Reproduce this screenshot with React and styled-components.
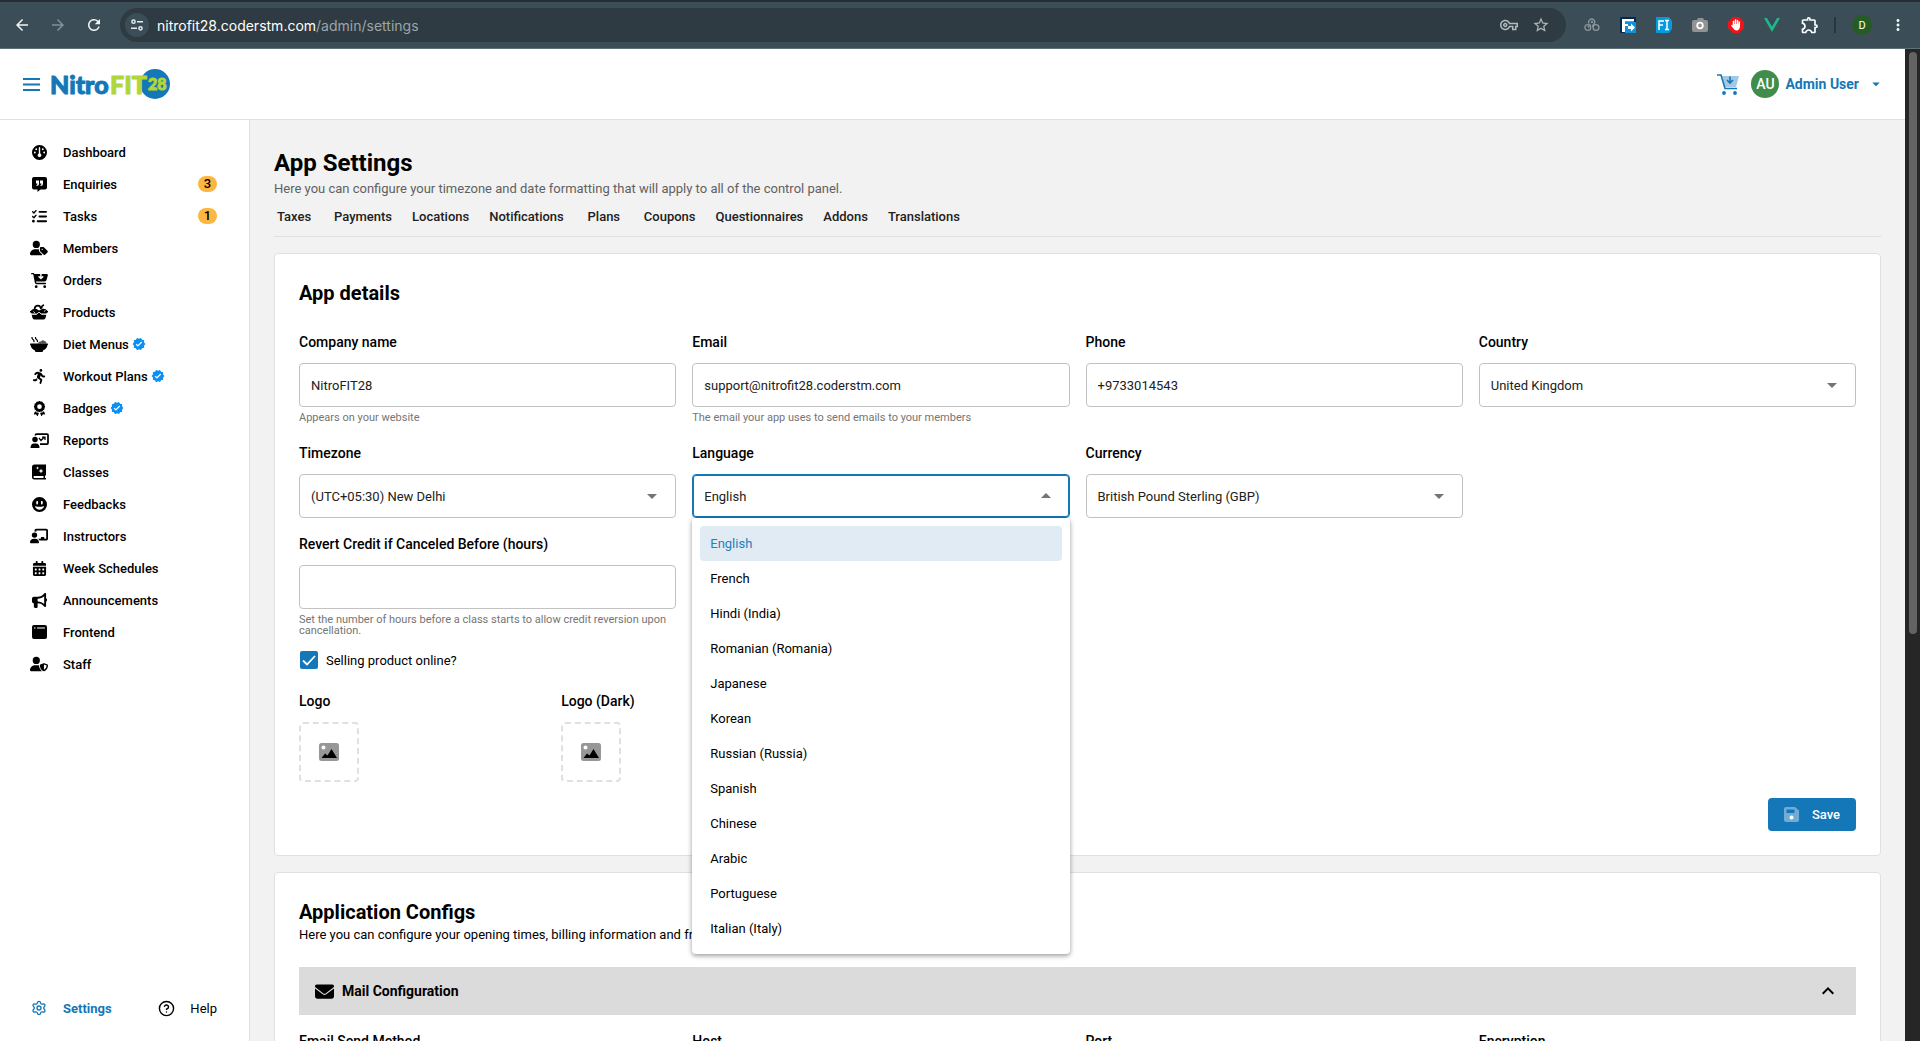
import React, { useState } from 'react'
import styled, { createGlobalStyle } from 'styled-components'
import {
  FaGauge, FaListCheck, FaUserTag, FaCartArrowDown, FaPersonRunning, FaAward,
  FaFaceGrinWide, FaChalkboardUser, FaCalendarDays, FaBullhorn, FaUserShield, FaEnvelope,
} from 'react-icons/fa6'
import {
  MdVerified, MdArrowDropDown, MdArrowDropUp, MdOutlineVpnKey, MdStarBorder,
  MdMoreVert, MdOutlineExtension, MdArrowBack, MdArrowForward, MdRefresh, MdExpandLess,
} from 'react-icons/md'
import { FiHelpCircle } from 'react-icons/fi'
import { Settings } from 'lucide-react'

/* ---------- icons ---------- */
const QuoteIcon = () => (
  <svg width="15" height="15" viewBox="0 0 30 30">
    <path fill="#000" d="M4 0h22a4 4 0 0 1 4 4v17a4 4 0 0 1-4 4H17l-6 5v-5H4a4 4 0 0 1-4-4V4a4 4 0 0 1 4-4z" />
    <path fill="#fff" d="M8 7h6v7q0 4-5 4v-2q2-1 2-3H8zM16 7h6v7q0 4-5 4v-2q2-1 2-3h-3z" />
  </svg>
)
const BasketIcon = () => (
  <svg width="18" height="16" viewBox="0 0 36 32">
    <path fill="none" stroke="#000" strokeWidth="3.5" d="M9 12q0-9 7-9 5 0 6 7M23 9q0-6 5-7" />
    <path d="M1 14q6-6 12-4l5 3 6-3q7-2 11 4l-2 5H22l-4-4-4 4H3z" />
    <path d="M0 14h36v3H0zM3 20h10l5-4 5 4h10l-2 8q-1 3-5 3H10q-4 0-5-3z" />
    <path stroke="#fff" strokeWidth="1.6" fill="none" d="M2 21h11l5-5 5 5h11M7 15l3 3M28 15l3-2" />
  </svg>
)
const BowlIcon = () => (
  <svg width="18" height="15" viewBox="0 0 36 30">
    <path fill="none" stroke="#000" strokeWidth="2.6" strokeLinecap="round" d="M4 1q0 3 2 4t2 4M11 1q0 3 2 4t2 4" />
    <path fill="#555" d="M16 13q1-5 6-4 3-4 7-1 4 0 4 5z" />
    <path d="M1 13h34q2 1 0 3-1 7-9 11v1q0 2-2 2h-12q-2 0-2-2v-1q-8-4-9-11-2-2 0-3z" />
  </svg>
)
const ReportIcon = () => (
  <svg width="19" height="15" viewBox="0 0 38 30">
    <circle cx="10" cy="13" r="5.5" />
    <path d="M1 30q0-9 7-9h4q7 0 7 9z" />
    <path fill="none" stroke="#000" strokeWidth="3.5" d="M11 5V4q0-2 2-2h21q2 0 2 2v16q0 2-2 2H20" />
    <path fill="none" stroke="#000" strokeWidth="2.5" d="M18 10l4 5 7-7M24 8h6v6" />
  </svg>
)
const BookIcon = () => (
  <svg width="14" height="16" viewBox="0 0 28 32">
    <path d="M5 1h23v22h-2v5h2v3H5q-5 0-5-5V6q0-5 5-5z" />
    <path fill="#fff" d="M5 24h18v4H5q-2 0-2-2t2-2zM18 9l1.500 3.500L23 14l-3.500 1.500L18 19l-1.500-3.500L13 14l3.500-1.500zM11 5l1 2 2 1-2 1-1 2-1-2-2-1 2-1z" />
  </svg>
)
const WindowIcon = () => (
  <svg width="15" height="14" viewBox="0 0 30 28">
    <rect width="30" height="28" rx="4" />
    <path stroke="#fff" strokeWidth="2" d="M4 6h3M10 6h16" />
  </svg>
)
const ImageIcon = () => (
  <svg width="20" height="18" viewBox="0 0 40 36">
    <rect width="40" height="36" rx="5" fill="#979797" />
    <circle cx="9" cy="9" r="4" fill="#fff" />
    <path d="M5 30l7-9 5 4 8-13 11 18z" />
  </svg>
)
const SaveIcon = () => (
  <svg width="15" height="15" viewBox="0 0 30 30">
    <path fill="#72abd5" d="M4 0h18l8 7v19a4 4 0 0 1-4 4H4a4 4 0 0 1-4-4V4a4 4 0 0 1 4-4z" />
    <path fill="#1477b8" d="M5 5h16v7H5z" />
    <circle cx="15" cy="21" r="4" fill="#fff" />
  </svg>
)
const MenuIcon = () => (
  <svg width="17" height="13" viewBox="0 0 17 13">
    <path stroke="#1477b8" strokeWidth="2" d="M0 1h17M0 6.500h17M0 12h17" />
  </svg>
)
const HeaderCart = () => (
  <svg width="22" height="21" viewBox="0 0 22 21">
    <path fill="#a3c8e3" d="M5 2h17l-3 11H7z" />
    <path fill="none" stroke="#1477b8" strokeWidth="1.600" d="M0 1h4l4 13.500h12" />
    <path fill="none" stroke="#1477b8" strokeWidth="1.600" d="M13 2.500v6M10 6l3 3 3-3" />
    <circle cx="7" cy="19" r="1.900" fill="#1477b8" />
    <circle cx="18" cy="19" r="1.900" fill="#1477b8" />
  </svg>
)
const TuneIcon = () => (
  <svg width="12" height="12" viewBox="0 0 12 12" fill="none" stroke="#e6eaec" strokeWidth="1.500">
    <circle cx="2.500" cy="2.700" r="1.600" />
    <circle cx="9.500" cy="9.300" r="1.600" />
    <path d="M6 2.700h6M0 9.300h6" />
  </svg>
)
const Logo = () => (
  <svg width="124" height="44" viewBox="0 0 124 44" role="img" aria-label="NitroFIT28">
    <circle cx="105" cy="22" r="15" fill="#1477b8" />
    <g fontFamily="Lato, 'Liberation Sans', sans-serif" fontWeight="900">
      <text x="60" y="32" fontSize="25" fill="#b2d63a" stroke="#b2d63a" strokeWidth="1">FIT</text>
      <text x="0" y="32" fontSize="25" fill="#1477b8" stroke="#1477b8" strokeWidth="1">Nitro</text>
      <text x="98" y="28" fontSize="16" fill="#b2d63a" stroke="#b2d63a" strokeWidth="1">28</text>
    </g>
  </svg>
)
const HookIcon = () => (
  <svg width="16" height="14" viewBox="0 0 16 14" fill="none" stroke="#8d979c" strokeWidth="1.300">
    <path d="M5 5.500A3 3 0 1 1 10 6L8 8.500" />
    <circle cx="3.800" cy="9.500" r="2.900" />
    <circle cx="12" cy="9.500" r="2.900" />
    <circle cx="8" cy="4" r="0.500" />
    <path d="M6.500 6.500L4 9.500" />
  </svg>
)
const FormIcon = () => (
  <svg width="16" height="16" viewBox="0 0 16 16">
    <rect width="16" height="16" rx="1" fill="#03294f" />
    <path fill="#1390d8" d="M5 5h11v11H5z" />
    <path fill="#fff" d="M2 2h12v2.500H5V7h3v2H5v6H2zM8 9h3V6.500l4 4-4 4V12H8z" />
  </svg>
)
const FontIcon = () => (
  <svg width="16" height="16" viewBox="0 0 16 16">
    <path fill="#089bdc" d="M1 0h12l3 4v8l-3 4H1q-1 0-1-1V1q0-1 1-1z" />
    <path fill="none" stroke="#fff" strokeWidth="1.500" d="M3 13V4h5M3 8h4M9 3.500h4M11 3.500v9M9 12.500h4" />
  </svg>
)
const CameraIcon = () => (
  <svg width="16" height="14" viewBox="0 0 16 14">
    <path fill="#929292" d="M2 2h3l1-2h5l1 2h2q2 0 2 2v8q0 2-2 2H2q-2 0-2-2V4q0-2 2-2z" />
    <circle cx="8" cy="7.500" r="2.800" fill="#929292" stroke="#fff" strokeWidth="1.800" />
  </svg>
)
const BlockIcon = () => (
  <svg width="16" height="16" viewBox="0 0 16 16">
    <path fill="#f41216" d="M5 0h6l5 5v6l-5 5H5l-5-5V5z" />
    <path fill="none" stroke="#fff" strokeWidth="1.500" strokeLinecap="round" d="M5.500 8V4.500M7.500 7V3M9.500 7V3.500M11.300 8V5" />
    <path fill="#fff" d="M4.800 7h7.200v2.500q-.5 4-3.500 4-2 0-3.500-2.500L3 8.500q1-1 1.800.3z" />
  </svg>
)
const VueIcon = () => (
  <svg width="16" height="14" viewBox="0 0 16 14">
    <path fill="#1fb784" d="M0 0h3.200L8 8.300 12.800 0H16L8 14z" />
    <path fill="#34495e" d="M3.200 0H6l2 3.500L10 0h2.800L8 8.300z" />
  </svg>
)

/* ---------- data ---------- */
const menu = [
  { name: 'Dashboard', icon: <FaGauge /> },
  { name: 'Enquiries', icon: <QuoteIcon />, count: 3 },
  { name: 'Tasks', icon: <FaListCheck />, count: 1 },
  { name: 'Members', icon: <FaUserTag size={18} /> },
  { name: 'Orders', icon: <FaCartArrowDown size={17} /> },
  { name: 'Products', icon: <BasketIcon /> },
  { name: 'Diet Menus', icon: <BowlIcon />, verified: true },
  { name: 'Workout Plans', icon: <FaPersonRunning />, verified: true },
  { name: 'Badges', icon: <FaAward />, verified: true },
  { name: 'Reports', icon: <ReportIcon /> },
  { name: 'Classes', icon: <BookIcon /> },
  { name: 'Feedbacks', icon: <FaFaceGrinWide /> },
  { name: 'Instructors', icon: <FaChalkboardUser size={18} /> },
  { name: 'Week Schedules', icon: <FaCalendarDays /> },
  { name: 'Announcements', icon: <FaBullhorn /> },
  { name: 'Frontend', icon: <WindowIcon /> },
  { name: 'Staff', icon: <FaUserShield size={18} /> },
]
const tabs = ['Taxes', 'Payments', 'Locations', 'Notifications', 'Plans', 'Coupons', 'Questionnaires', 'Addons', 'Translations']
const languages = [
  'English', 'French', 'Hindi (India)', 'Romanian (Romania)', 'Japanese', 'Korean',
  'Russian (Russia)', 'Spanish', 'Chinese', 'Arabic', 'Portuguese', 'Italian (Italy)',
]

/* ---------- form parts ---------- */
function TextField({ id, label, value, type = 'text', help }) {
  return (
    <Field>
      <Label htmlFor={id}>{label}</Label>
      <Control>
        <Input id={id} type={type} defaultValue={value} />
      </Control>
      {help && <Help>{help}</Help>}
    </Field>
  )
}

function SelectField({ id, label, value }) {
  return (
    <Field>
      <Label htmlFor={id}>{label}</Label>
      <Control>
        <Select id={id} defaultValue={value}>
          <option>{value}</option>
        </Select>
        <Arrow><MdArrowDropDown /></Arrow>
      </Control>
    </Field>
  )
}

function LanguageField() {
  const [language, setLanguage] = useState('English')
  return (
    <Field>
      <Label htmlFor="language">Language</Label>
      <Control $active>
        <Select id="language" value={language} onChange={(e) => setLanguage(e.target.value)}>
          {languages.map((l) => <option key={l}>{l}</option>)}
        </Select>
        <Arrow><MdArrowDropUp /></Arrow>
      </Control>
      <Options role="listbox" aria-label="Language">
        {languages.map((l) => (
          <Option key={l} role="option" aria-selected={l === language} $active={l === language} onClick={() => setLanguage(l)}>
            {l}
          </Option>
        ))}
      </Options>
    </Field>
  )
}

function BrowserBar() {
  return (
    <Browser>
      <NavButton aria-label="Back"><MdArrowBack /></NavButton>
      <NavButton aria-label="Forward" $muted><MdArrowForward /></NavButton>
      <NavButton aria-label="Reload"><MdRefresh /></NavButton>
      <Address>
        <SiteInfo><TuneIcon /></SiteInfo>
        <Url><b>nitrofit28.coderstm.com</b>/admin/settings</Url>
        <MdOutlineVpnKey />
        <MdStarBorder />
      </Address>
      <Extensions>
        <HookIcon />
        <FormIcon />
        <FontIcon />
        <CameraIcon />
        <BlockIcon />
        <VueIcon />
        <MdOutlineExtension size={20} />
      </Extensions>
      <Separator />
      <Profile>D</Profile>
      <NavButton aria-label="More"><MdMoreVert /></NavButton>
    </Browser>
  )
}

function Sidebar() {
  return (
    <Aside>
      <nav>
        {menu.map((m) => (
          <MenuItem key={m.name} href="#">
            <IconBox>{m.icon}</IconBox>
            <span>{m.name}</span>
            {m.verified && <Verified><MdVerified /></Verified>}
            {m.count && <Count>{m.count}</Count>}
          </MenuItem>
        ))}
      </nav>
      <Bottom>
        <BottomLink href="#" $active>
          <IconBox><Settings size={16} strokeWidth={2} /></IconBox>
          Settings
        </BottomLink>
        <BottomLink href="#">
          <IconBox><FiHelpCircle size={17} /></IconBox>
          Help
        </BottomLink>
      </Bottom>
    </Aside>
  )
}

export default function App() {
  return (
    <Page>
      <GlobalStyle />
      <BrowserBar />
      <Viewport>
        <Shell>
          <Header>
            <MenuButton aria-label="Menu"><MenuIcon /></MenuButton>
            <Logo />
            <User>
              <HeaderCart />
              <Avatar>AU</Avatar>
              <UserName>Admin User <MdArrowDropDown size={18} /></UserName>
            </User>
          </Header>
          <Body>
            <Sidebar />
            <Main>
              <Title>App Settings</Title>
              <Lead>Here you can configure your timezone and date formatting that will apply to all of the control panel.</Lead>
              <Tabs>
                {tabs.map((t) => <Tab key={t} href="#">{t}</Tab>)}
              </Tabs>
              <Card>
                <CardTitle>App details</CardTitle>
                <Grid>
                  <TextField id="company" label="Company name" value="NitroFIT28" help="Appears on your website" />
                  <TextField id="email" label="Email" type="email" value="support@nitrofit28.coderstm.com" help="The email your app uses to send emails to your members" />
                  <TextField id="phone" label="Phone" type="tel" value="+9733014543" />
                  <SelectField id="country" label="Country" value="United Kingdom" />
                  <SelectField id="timezone" label="Timezone" value="(UTC+05:30) New Delhi" />
                  <LanguageField />
                  <SelectField id="currency" label="Currency" value="British Pound Sterling (GBP)" />
                  <RowStart>
                    <TextField
                      id="revert"
                      label="Revert Credit if Canceled Before (hours)"
                      help="Set the number of hours before a class starts to allow credit reversion upon cancellation."
                    />
                  </RowStart>
                </Grid>
                <CheckLabel>
                  <Checkbox type="checkbox" defaultChecked />
                  Selling product online?
                </CheckLabel>
                <Logos>
                  <div>
                    <Label as="p">Logo</Label>
                    <Upload aria-label="Upload logo"><ImageIcon /></Upload>
                  </div>
                  <div>
                    <Label as="p">Logo (Dark)</Label>
                    <Upload aria-label="Upload dark logo"><ImageIcon /></Upload>
                  </div>
                </Logos>
                <Actions>
                  <SaveButton><SaveIcon /> Save</SaveButton>
                </Actions>
              </Card>
              <Card>
                <CardTitle>Application Configs</CardTitle>
                <CardText>Here you can configure your opening times, billing information and fr</CardText>
                <Accordion>
                  <FaEnvelope size={19} />
                  Mail Configuration
                  <MdExpandLess size={24} />
                </Accordion>
                <Grid $tight>
                  <SelectField id="method" label="Email Send Method" value="SMTP" />
                  <TextField id="host" label="Host" />
                  <TextField id="port" label="Port" />
                  <SelectField id="encryption" label="Encryption" value="TLS" />
                </Grid>
              </Card>
            </Main>
          </Body>
        </Shell>
        <ScrollTrack><ScrollThumb /></ScrollTrack>
      </Viewport>
    </Page>
  )
}

const GlobalStyle = createGlobalStyle`
  * {
    box-sizing: border-box;
    margin: 0;
    padding: 0;
  }
  body, button, input, select {
    font-family: Roboto, "Liberation Sans", sans-serif;
    font-size: 13px;
  }
  button {
    border: none;
    background: none;
    cursor: pointer;
  }
  a {
    color: inherit;
    text-decoration: none;
  }
  svg {
    display: block;
    flex: none;
  }
`

const Page = styled.div`
  height: 100vh;
  display: flex;
  flex-direction: column;
  overflow: hidden;
  color: #000;
`

const Browser = styled.div`
  height: 49px;
  flex: none;
  display: flex;
  align-items: center;
  padding: 0 4px;
  background: #3b4e57;
  border-top: 2px solid #242d33;
  border-bottom: 1px solid #5f7079;
  color: #e6eaec;
`

const NavButton = styled.button`
  width: 36px;
  height: 36px;
  display: flex;
  align-items: center;
  justify-content: center;
  font-size: 18px;
  color: ${(p) => (p.$muted ? '#839097' : '#f0f3f4')};
`

const Address = styled.div`
  flex: 1;
  height: 34px;
  margin-left: 8px;
  padding: 0 16px 0 5px;
  border-radius: 17px;
  background: #2f3b42;
  display: flex;
  align-items: center;
  gap: 14px;
  color: #b0b9bd;
  & > svg {
    font-size: 18px;
  }
`

const SiteInfo = styled.span`
  width: 24px;
  height: 24px;
  margin-right: -6px;
  border-radius: 50%;
  background: #3b4e57;
  display: flex;
  align-items: center;
  justify-content: center;
`

const Url = styled.span`
  flex: 1;
  font-family: Inter, Roboto, sans-serif;
  font-size: 14px;
  color: #9ba5aa;
  b {
    font-weight: 400;
    color: #fff;
  }
`

const Extensions = styled.div`
  display: flex;
  align-items: center;
  gap: 20px;
  margin-left: 18px;
  color: #fff;
`

const Separator = styled.span`
  width: 2px;
  height: 16px;
  margin: 0 16px 0 14px;
  background: #2a363c;
`

const Profile = styled.span`
  width: 20px;
  height: 20px;
  margin-right: 8px;
  border-radius: 50%;
  background: #255c22;
  color: #fff;
  font-size: 11px;
  display: flex;
  align-items: center;
  justify-content: center;
`

const Viewport = styled.div`
  flex: 1;
  min-height: 0;
  display: flex;
`

const Shell = styled.div`
  flex: 1;
  min-width: 0;
  display: flex;
  flex-direction: column;
`

const ScrollTrack = styled.div`
  width: 15px;
  padding: 3px;
  background: #262626;
`

const ScrollThumb = styled.div`
  width: 8px;
  height: 59%;
  margin-left: 1px;
  border-radius: 4px;
  background: #636363;
`

const Header = styled.header`
  height: 71px;
  flex: none;
  display: flex;
  align-items: center;
  padding: 0 20px 0 23px;
  background: #fff;
  border-bottom: 1px solid #e0e0e0;
`

const MenuButton = styled.button`
  margin-right: 10px;
`

const User = styled.div`
  margin-left: auto;
  display: flex;
  align-items: center;
  gap: 12px;
`

const Avatar = styled.span`
  width: 28px;
  height: 28px;
  border-radius: 50%;
  background: #408c4b;
  color: #fff;
  font-size: 14px;
  font-weight: 500;
  display: flex;
  align-items: center;
  justify-content: center;
`

const UserName = styled.button`
  display: flex;
  align-items: center;
  gap: 8px;
  margin-left: -6px;
  color: #1477b8;
  font-size: 14px;
  font-weight: 700;
`

const Body = styled.div`
  flex: 1;
  min-height: 0;
  display: flex;
`

const Aside = styled.aside`
  width: 250px;
  flex: none;
  padding: 16px 32px 17px 29px;
  display: flex;
  flex-direction: column;
  justify-content: space-between;
  background: #fff;
  border-right: 1px solid #e0e0e0;
`

const MenuItem = styled.a`
  height: 32px;
  display: flex;
  align-items: center;
  font-weight: 500;
`

const IconBox = styled.span`
  width: 20px;
  margin-right: 14px;
  display: flex;
  justify-content: center;
  font-size: 15px;
`

const Verified = styled.span`
  margin-left: 3px;
  font-size: 14px;
  color: #0a8ff5;
`

const Count = styled.span`
  width: 19px;
  height: 16px;
  margin-left: auto;
  border-radius: 8px;
  background: #fbb644;
  line-height: 16px;
  text-align: center;
`

const Bottom = styled.div`
  display: flex;
  justify-content: space-between;
`

const BottomLink = styled.a`
  height: 32px;
  display: flex;
  align-items: center;
  color: ${(p) => (p.$active ? '#1477b8' : '#000')};
  font-weight: ${(p) => (p.$active ? 700 : 400)};
`

const Main = styled.main`
  flex: 1;
  min-width: 0;
  overflow-y: auto;
  scrollbar-width: none;
  padding: 27px 24px;
  background: #f2f2f2;
`

const Title = styled.h1`
  font-size: 24px;
  line-height: 32px;
  font-weight: 700;
`

const Lead = styled.p`
  line-height: 20px;
  color: #616161;
`

const Tabs = styled.nav`
  display: flex;
  gap: 20px;
  margin: 8px 0 16px;
  padding-bottom: 9px;
  border-bottom: 1px solid #e0e0e0;
`

const Tab = styled.a`
  min-width: 40px;
  line-height: 20px;
  text-align: center;
  font-weight: 500;
  color: #212121;
`

const Card = styled.section`
  padding: 24px;
  margin-bottom: 16px;
  background: #fff;
  border: 1px solid #e0e0e0;
  border-radius: 4px;
`

const CardTitle = styled.h2`
  font-size: 20px;
  line-height: 30px;
  font-weight: 700;
`

const CardText = styled.p`
  line-height: 16px;
  margin-bottom: 24px;
`

const Grid = styled.div`
  display: grid;
  grid-template-columns: repeat(4, minmax(0, 1fr));
  gap: 16px;
  margin-top: ${(p) => (p.$tight ? '16px' : '24px')};
`

const RowStart = styled.div`
  grid-column: 1;
`

const Field = styled.div`
  position: relative;
`

const Label = styled.label`
  display: block;
  margin-bottom: 11px;
  font-size: 14px;
  line-height: 20px;
  font-weight: 500;
`

const Control = styled.div`
  height: 44px;
  display: flex;
  align-items: center;
  border-radius: 4px;
  border: 1px solid ${(p) => (p.$active ? '#1477b8' : '#c2c2c2')};
  box-shadow: ${(p) => (p.$active ? 'inset 0 0 0 1px #1477b8' : 'none')};
`

const Input = styled.input`
  width: 100%;
  height: 100%;
  padding: 0 11px;
  border: none;
  outline: none;
  background: transparent;
  color: #212121;
`

const Select = styled(Input).attrs({ as: 'select' })`
  appearance: none;
`

const Arrow = styled.span`
  margin: 0 11px 0 -35px;
  font-size: 24px;
  color: #757575;
  pointer-events: none;
`

const Help = styled.p`
  padding: 5px 0 4px;
  font-size: 11px;
  line-height: 11px;
  color: #757575;
`

const Options = styled.ul`
  position: absolute;
  top: 100%;
  left: 0;
  right: 0;
  z-index: 10;
  padding: 8px;
  list-style: none;
  background: #fff;
  border-radius: 4px;
  box-shadow: 0 2px 4px rgba(0, 0, 0, 0.3), 0 1px 6px rgba(0, 0, 0, 0.12);
`

const Option = styled.li`
  padding: 0 10px;
  line-height: 35px;
  border-radius: 4px;
  cursor: pointer;
  color: ${(p) => (p.$active ? '#1f80c0' : '#000')};
  background: ${(p) => (p.$active ? '#e0ebf4' : 'transparent')};
`

const CheckLabel = styled.label`
  display: flex;
  align-items: center;
  gap: 8px;
  height: 18px;
  margin: 11px 0 22px 1px;
`

const Checkbox = styled.input`
  appearance: none;
  width: 18px;
  height: 18px;
  border-radius: 2px;
  border: 2px solid #1477b8;
  &:checked {
    background: #1477b8 url("data:image/svg+xml,%3Csvg xmlns='http://www.w3.org/2000/svg' viewBox='0 0 14 14'%3E%3Cpath d='M1 7.500l4 4L13 3' fill='none' stroke='white' stroke-width='1.800'/%3E%3C/svg%3E") center / 14px no-repeat;
  }
`

const Logos = styled.div`
  display: grid;
  grid-template-columns: repeat(6, minmax(0, 1fr));
  gap: 16px;
`

const Upload = styled.button`
  width: 60px;
  height: 60px;
  display: flex;
  align-items: center;
  justify-content: center;
  border: 2px dashed #e0e0e0;
  border-radius: 4px;
`

const Actions = styled.div`
  display: flex;
  justify-content: flex-end;
  margin-top: 16px;
`

const SaveButton = styled.button`
  height: 33px;
  padding: 0 16px;
  display: flex;
  align-items: center;
  gap: 13px;
  border-radius: 4px;
  background: #1477b8;
  color: #fff;
  font-weight: 500;
`

const Accordion = styled.button`
  width: 100%;
  height: 48px;
  padding: 0 16px;
  display: flex;
  align-items: center;
  gap: 8px;
  background: #dbdbdb;
  font-size: 14px;
  font-weight: 700;
  & > svg:last-child {
    margin-left: auto;
  }
`
